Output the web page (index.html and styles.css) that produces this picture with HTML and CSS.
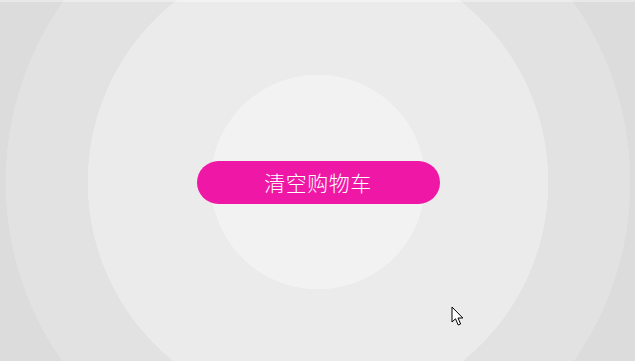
FILE: index.html
```html
<!DOCTYPE html>
<html lang="zh-CN">
<head>
<meta charset="utf-8">
<title>清空购物车</title>
<link rel="stylesheet" href="styles.css">
</head>
<body>
<main class="stage">
  <button class="clear-btn" type="button">清空购物车</button>
</main>
<svg class="cursor" width="14" height="22" viewBox="0 0 14 22" aria-hidden="true">
  <path d="M1 1 L1 16 L4.5 12.8 L7.2 19 L9.6 18 L7 12 L11.8 12 Z" fill="#fff" stroke="#000" stroke-width="1" stroke-linejoin="miter"/>
</svg>
</body>
</html>
```
FILE: styles.css
```css
html, body {
  margin: 0;
  padding: 0;
  width: 100%;
  height: 100%;
}
body {
  background: radial-gradient(circle at 318px 182px,
    #f2f2f2 0 107px,
    #ebebeb 107.5px 230px,
    #e2e2e2 230.5px 312px,
    #dcdcdc 312.5px);
  font-family: "Noto Sans CJK SC", "Noto Sans", sans-serif;
  overflow: hidden;
  position: relative;
}
body::before {
  content: "";
  display: block;
  height: 2px;
  background: rgba(255,255,255,0.35);
}
.stage {
  height: 359px;
  box-sizing: border-box;
  padding: 2px 0 0 1px;
  display: flex;
  align-items: center;
  justify-content: center;
}
.clear-btn {
  width: 243px;
  height: 43px;
  border: none;
  border-radius: 22px;
  background: #ef17a5;
  color: #ffffff;
  font-family: "Noto Sans CJK SC", "Noto Sans", sans-serif;
  font-size: 21px;
  font-weight: 300;
  letter-spacing: 0.5px;
  padding: 0;
  line-height: 43px;
}
.cursor {
  position: absolute;
  left: 451px;
  top: 306px;
}
```
